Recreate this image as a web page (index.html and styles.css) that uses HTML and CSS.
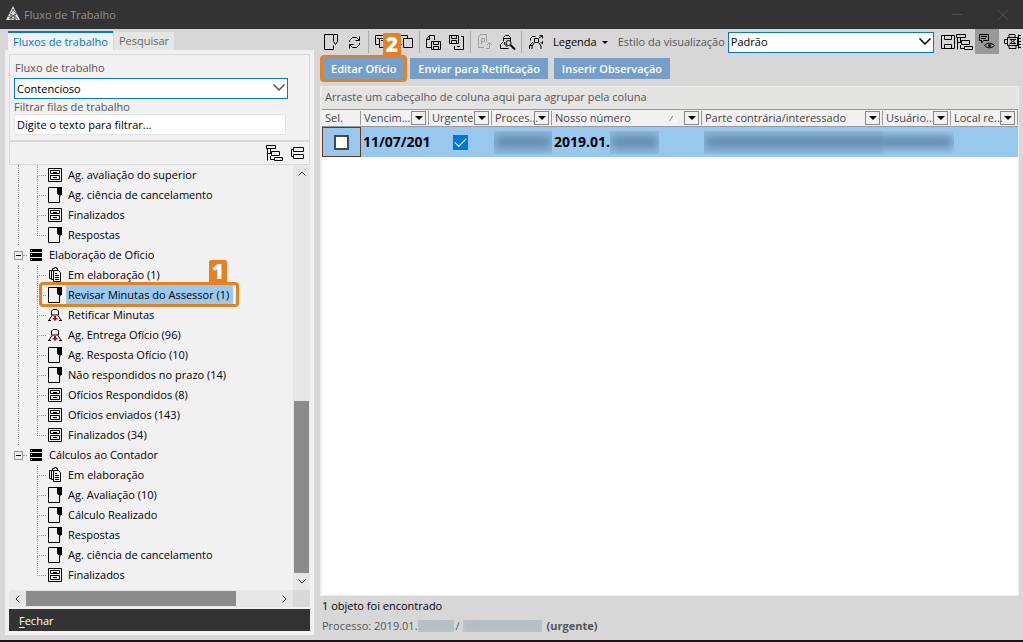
FILE: index.html
```
<!DOCTYPE html>
<html lang="pt-BR">
<head>
<meta charset="utf-8">
<title>Fluxo de Trabalho</title>
<link rel="stylesheet" href="styles.css">
</head>
<body>
<svg class="sprite" aria-hidden="true">
  <symbol id="i-drawer" viewBox="0 0 14 14"><path d="M.5.5h13v13H.5zM2.500 2.500h9v3h-9zM2.500 7.500h9v4h-9z" class="ln"/><path d="M5 4h4v1H5zM5 9h4v1H5z"/></symbol>
  <symbol id="i-page" viewBox="0 0 14 16"><path d="M9 .5H.5v15h11V9" class="ln"/><path d="M9 0h5v8h-1l-1 2-1-2H10L9 6z"/></symbol>
  <symbol id="i-docs" viewBox="0 0 14 16"><path d="M5.500 3.500h5l2 2v9h-7zM5 12.500H3.500v-9h2M3 11.500H1.500v-8h2M4.500 3V1.500h2v-1h2v1h1V3M7 6.500h2M7 8.500h4M7 10.500h4M7 12.500h4" class="ln"/></symbol>
  <symbol id="i-person" viewBox="0 0 14 14"><path d="M3.500 7V3l1.500-1.500h4L10.500 3v4zM4 7.500l-3 4.500M10 7.500l3 4.500M0 12.500h3M11 12.500h3" class="ln"/><path d="M6 8h2v2h2l-3 3-3-3h2z" class="red"/></symbol>
  <symbol id="i-stack" viewBox="0 0 12 12"><path d="M0 0h12v3H0zM0 4h12v4H0zM0 9h12v3H0z"/><path d="M1 1h1v1H1zM1 5h1v1H1zM1 10h1v1H1z" fill="#fff"/></symbol>
  <symbol id="i-tree" viewBox="0 0 17 16"><path d="M.5.5h9v3h-9zM5.500 6.500h8v4h-8zM8.500 12.500h8v3h-8zM1.500 4v11.500M1.500 8.500h4M4.500 4v4M4.500 11v3.500h4" class="ln"/></symbol>
  <symbol id="i-collapse" viewBox="0 0 13 12"><path d="M2.500.5h10v4h-10zM2.500 7.500h10v4h-10zM2 2.500H.5v7H2" class="ln"/></symbol>
  <symbol id="i-new" viewBox="0 0 15 16"><path d="M9 .5H.5v15h9v-4M9.500.5h4v7l-2 3-2-3z" class="ln"/></symbol>
  <symbol id="i-refresh" viewBox="0 0 13 13"><path d="M1.500 6V4.500l3-3h4l3 3V.5M11.500 4.500h-4M11.500 7v1.500l-3 3h-4l-3-3v4M1.500 8.500h4" class="ln"/></symbol>
  <symbol id="i-copyt" viewBox="0 0 15 14"><path d="M4 9.500H.5v-9h11V3M4.500 3.500h10v9h-10zM2 3.500h2M6 5.500h5M8.500 6v5" class="ln"/></symbol>
  <symbol id="i-copy" viewBox="0 0 15 14"><path d="M4 9.500H.5v-9h9V3M5.500 3.500h9v9h-9z" class="ln"/></symbol>
  <symbol id="i-savein" viewBox="0 0 15 15"><path d="M5 12.500H.5V4l3-3.500h5V5M.5 4.500h3V1M5.500 6.500h9v8h-9zM7.500 7v2.500h5V7M7.500 14v-2.500h5V14" class="ln"/></symbol>
  <symbol id="i-saveout" viewBox="0 0 15 15"><path d="M.5.5h9v8h-9zM2.500 1v2.500h5V1M2.500 8V5.500h5V8M12 1.500h2.500v13h-9V11M8 11.500h3" class="ln"/></symbol>
  <symbol id="i-export" viewBox="0 0 14 16"><path d="M6 13.500H.5V3l2-2.500h6V8M3.500 10V4.500h3v3h-3M8 14.500h3.500V9M9 11l2.500-2.500L14 11" class="ln"/></symbol>
  <symbol id="i-search" viewBox="0 0 16 15"><path d="M3.500 6V2.500l2-2h3l2 2V6M3.500 3.500h7M3.500 6.500L.5 9.500v4h8M4.500 7v2l3 3" class="ln"/><circle cx="8.500" cy="8" r="2.500" class="ln"/><path d="M10.500 10l4.500 4.500" class="ln thick"/></symbol>
  <symbol id="i-users" viewBox="0 0 14 15"><path d="M5.500 3.500h4v4h-4zM5 8l-2 3v3M10 8l2 3v3M1.500 5.500v-2l2-2h3M10.500.5h3v3M13 1l-3 2M.5 14v-3.500h3M1 10l3-3M13.500 6v3l-2-2" class="ln"/></symbol>
  <symbol id="i-save" viewBox="0 0 14 14"><path d="M.5.5h13v13H.5zM3.500 1v3.500h7V1M3.500 13V9.500h7V13" class="ln"/></symbol>
  <symbol id="i-view" viewBox="0 0 16 15"><path d="M.5.5h9v6h-5L2.500 9V6.500h-2zM2 2.500h6M2 4.500h5M5.500 11.500c3-3 7-3 10 0-3 3-7 3-10 0z" class="ln"/><circle cx="10.500" cy="11.500" r="1.500"/></symbol>
  <symbol id="i-board" viewBox="0 0 17 15"><path d="M3.500 3.500h10v8h-10zM5 3V.5h6V3M5 12v2.500h7V12M3 5.500H.5v4H3M5.500 5l3 2.500-3 2.500M12 5L9 7.500l3 2.500M6 5.500h5M6 9.500h5M14.500.5v14M15 1.500h2M15 4.500h2M15 7.500h2M15 10.500h2M15 13.500h2" class="ln"/></symbol>
  <symbol id="i-chevron" viewBox="0 0 12 7"><path d="M.5.5L6 6 11.500.5" class="ln bold"/></symbol>
</svg>

<div class="window">
  <header class="titlebar">
    <svg class="logo" width="14" height="15" viewBox="0 0 14 15" aria-hidden="true"><path d="M7 0l7 14H0z" fill="#ddd"/><path d="M3 7l9 6M2 10l8 4M11 7l-8 6M6 3l4 4M8 3L5 7M5 8v6M9 8v6" stroke="#333" stroke-width=".7"/></svg>
    <h1>Fluxo de Trabalho</h1>
    <button class="win" aria-label="Minimizar"><svg width="12" height="12" viewBox="0 0 12 12"><path d="M0 5.500h11"/></svg></button>
    <button class="win" aria-label="Fechar janela"><svg width="12" height="12" viewBox="0 0 12 12"><path d="M.5.5l11 11M11.500.5l-11 11"/></svg></button>
  </header>

  <div class="body">
    <aside class="side">
      <div class="tabs" role="tablist">
        <button class="tab active" role="tab" aria-selected="true">Fluxos de trabalho</button>
        <button class="tab" role="tab" aria-selected="false">Pesquisar</button>
      </div>
      <div class="panel">
        <div class="filters">
          <label class="first" for="flow">Fluxo de trabalho</label>
          <span class="combo"><select id="flow"><option>Contencioso</option></select><svg width="12" height="7"><use href="#i-chevron"/></svg></span>
          <label for="queue">Filtrar filas de trabalho</label>
          <input id="queue" type="text" value="Digite o texto para filtrar...">
        </div>
        <div class="treebar">
          <button aria-label="Expandir tudo"><svg width="17" height="16"><use href="#i-tree"/></svg></button>
          <button aria-label="Recolher tudo"><svg width="13" height="12"><use href="#i-collapse"/></svg></button>
        </div>
        <div class="treebox">
          <div class="tree">
            <ul class="leaves guided">
              <li><i class="branch"></i><svg width="14" height="14"><use href="#i-drawer"/></svg><span>Ag. avaliação do superior</span></li>
              <li><i class="branch"></i><svg width="14" height="16"><use href="#i-page"/></svg><span>Ag. ciência de cancelamento</span></li>
              <li><i class="branch"></i><svg width="14" height="14"><use href="#i-drawer"/></svg><span>Finalizados</span></li>
              <li><i class="branch"></i><svg width="14" height="16"><use href="#i-page"/></svg><span>Respostas</span></li>
            </ul>
            <div class="group"><button class="toggle" aria-label="Recolher Elaboração de Ofício"></button><i class="link"></i><svg width="12" height="12"><use href="#i-stack"/></svg><span>Elaboração de Ofício</span></div>
            <ul class="leaves guided">
              <li><i class="branch"></i><svg width="14" height="16"><use href="#i-docs"/></svg><span>Em elaboração (1)</span></li>
              <li class="selected"><i class="branch"></i><svg width="14" height="16"><use href="#i-page"/></svg><span>Revisar Minutas do Assessor (1)</span><b class="ring"></b><b class="step">1</b></li>
              <li><i class="branch"></i><svg width="14" height="14"><use href="#i-person"/></svg><span>Retificar Minutas</span></li>
              <li><i class="branch"></i><svg width="14" height="14"><use href="#i-person"/></svg><span>Ag. Entrega Ofício (96)</span></li>
              <li><i class="branch"></i><svg width="14" height="16"><use href="#i-page"/></svg><span>Ag. Resposta Ofício (10)</span></li>
              <li><i class="branch"></i><svg width="14" height="16"><use href="#i-page"/></svg><span>Não respondidos no prazo (14)</span></li>
              <li><i class="branch"></i><svg width="14" height="14"><use href="#i-drawer"/></svg><span>Ofícios Respondidos (8)</span></li>
              <li><i class="branch"></i><svg width="14" height="14"><use href="#i-drawer"/></svg><span>Ofícios enviados (143)</span></li>
              <li><i class="branch"></i><svg width="14" height="14"><use href="#i-drawer"/></svg><span>Finalizados (34)</span></li>
            </ul>
            <div class="group"><button class="toggle" aria-label="Recolher Cálculos ao Contador"></button><i class="link"></i><svg width="12" height="12"><use href="#i-stack"/></svg><span>Cálculos ao Contador</span></div>
            <ul class="leaves">
              <li><i class="branch"></i><svg width="14" height="16"><use href="#i-docs"/></svg><span>Em elaboração</span></li>
              <li><i class="branch"></i><svg width="14" height="16"><use href="#i-page"/></svg><span>Ag. Avaliação (10)</span></li>
              <li><i class="branch"></i><svg width="14" height="16"><use href="#i-page"/></svg><span>Cálculo Realizado</span></li>
              <li><i class="branch"></i><svg width="14" height="16"><use href="#i-page"/></svg><span>Respostas</span></li>
              <li><i class="branch"></i><svg width="14" height="16"><use href="#i-page"/></svg><span>Ag. ciência de cancelamento</span></li>
              <li><i class="branch"></i><svg width="14" height="14"><use href="#i-drawer"/></svg><span>Finalizados</span></li>
            </ul>
          </div>
          <div class="vscroll">
            <button aria-label="Rolar para cima"><svg width="8" height="5" viewBox="0 0 8 5"><path d="M.5 4.500L4 1l3.500 3.500" class="ln"/></svg></button>
            <div class="track"><div class="thumb"></div></div>
            <button aria-label="Rolar para baixo"><svg width="8" height="5" viewBox="0 0 8 5"><path d="M.5.5L4 4 7.500.5" class="ln"/></svg></button>
          </div>
          <div class="hscroll">
            <button aria-label="Rolar para a esquerda"><svg width="5" height="8" viewBox="0 0 5 8"><path d="M4.500.5L1 4l3.500 3.500" class="ln"/></svg></button>
            <div class="track"><div class="thumb"></div></div>
            <button aria-label="Rolar para a direita"><svg width="5" height="8" viewBox="0 0 5 8"><path d="M.5.5L4 4 .5 7.500" class="ln"/></svg></button>
          </div>
        </div>
        <button class="close"><u>F</u>echar</button>
      </div>
    </aside>

    <main class="main">
      <div class="toolbar">
        <button class="tool" aria-label="Novo"><svg width="15" height="16"><use href="#i-new"/></svg></button>
        <button class="tool" aria-label="Atualizar"><svg width="13" height="13"><use href="#i-refresh"/></svg></button>
        <i class="sep"></i>
        <button class="tool" aria-label="Copiar texto"><svg width="15" height="14"><use href="#i-copyt"/></svg></button>
        <button class="tool" aria-label="Copiar"><svg width="15" height="14"><use href="#i-copy"/></svg><b class="step">2</b></button>
        <i class="sep"></i>
        <button class="tool" aria-label="Salvar documento"><svg width="15" height="15"><use href="#i-savein"/></svg></button>
        <button class="tool" aria-label="Salvar em arquivo"><svg width="15" height="15"><use href="#i-saveout"/></svg></button>
        <i class="sep"></i>
        <button class="tool" aria-label="Exportar" disabled><svg width="14" height="16"><use href="#i-export"/></svg></button>
        <button class="tool" aria-label="Localizar"><svg width="16" height="15"><use href="#i-search"/></svg></button>
        <i class="sep"></i>
        <button class="tool" aria-label="Usuários"><svg width="14" height="15"><use href="#i-users"/></svg></button>
        <button class="legend">Legenda</button>
        <label for="style">Estilo da visualização</label>
        <span class="combo"><select id="style"><option>Padrão</option></select><svg width="12" height="7"><use href="#i-chevron"/></svg></span>
        <div class="viewtools">
          <button aria-label="Salvar estilo"><svg width="14" height="14"><use href="#i-save"/></svg></button>
          <button aria-label="Hierarquia"><svg width="17" height="16"><use href="#i-tree"/></svg></button>
          <button class="on" aria-label="Visualizar"><svg width="16" height="15"><use href="#i-view"/></svg></button>
          <button aria-label="Painel"><svg width="17" height="15"><use href="#i-board"/></svg></button>
        </div>
      </div>

      <div class="actions">
        <button>Editar Ofício<b class="ring"></b></button>
        <button>Enviar para Retificação</button>
        <button>Inserir Observação</button>
      </div>

      <section class="grid">
        <p class="hint">Arraste um cabeçalho de coluna aqui para agrupar pela coluna</p>
        <table>
          <colgroup><col class="c1"><col class="c2"><col class="c3"><col class="c4"><col class="c5"><col class="c6"><col class="c7"><col class="c8"></colgroup>
          <thead>
            <tr>
              <th><div>Sel.</div></th>
              <th><div><span>Vencim...</span><button aria-label="Filtrar Vencimento"></button></div></th>
              <th><div><span>Urgente</span><button aria-label="Filtrar Urgente"></button></div></th>
              <th><div><span>Proces...</span><button aria-label="Filtrar Processo"></button></div></th>
              <th><div><span>Nosso número</span><svg width="8" height="7" viewBox="0 0 8 7" aria-hidden="true"><path d="M.5 6.500l3.500-6" stroke="#888" fill="none"/><path d="M4 .5l3.500 6H.5" stroke="#fff" fill="none"/></svg><button aria-label="Filtrar Nosso número"></button></div></th>
              <th><div><span>Parte contrária/interessado</span><button aria-label="Filtrar Parte contrária"></button></div></th>
              <th><div><span>Usuário...</span><button aria-label="Filtrar Usuário"></button></div></th>
              <th><div><span>Local re...</span><button aria-label="Filtrar Local"></button></div></th>
            </tr>
          </thead>
          <tbody>
            <tr>
              <td class="pick"><input type="checkbox" aria-label="Selecionar"></td>
              <td>11/07/201</td>
              <td class="mid"><input type="checkbox" aria-label="Urgente" checked></td>
              <td><i class="mask"></i></td>
              <td><div class="number">2019.01.<i class="mask"></i></div></td>
              <td><i class="mask wide"></i></td>
              <td></td>
              <td></td>
            </tr>
          </tbody>
        </table>
      </section>

      <footer class="status">
        <p>1 objeto foi encontrado</p>
        <p class="process">Processo: 2019.01.<i class="mask s1"></i>/<i class="mask s2"></i><strong>(urgente)</strong></p>
      </footer>
    </main>
  </div>
</div>
</body>
</html>
```
FILE: styles.css
```
* { box-sizing: border-box; }
body { margin: 0; font: 11px/16px "Open Sans", "Noto Sans", sans-serif; color: #000; }
button, input, select { font: inherit; color: inherit; border: 0; border-radius: 0; margin: 0; padding: 0; background: none; }
p, h1, ul { margin: 0; padding: 0; }
svg { display: block; flex: none; }
.sprite { display: none; }
.ln { fill: none; stroke: currentColor; }
.thick { stroke-width: 2; }
.bold { stroke-width: 1.5; }
.red { fill: #c4001a; }

.window { height: 100vh; display: flex; flex-direction: column; background: #d7d7d7; border-bottom: 2px solid #1a1517; }
.titlebar { height: 29px; flex: none; display: flex; align-items: center; background: #333; padding: 0 14px 0 6px; }
.titlebar h1 { flex: 1; margin-left: 4px; font-size: 11px; font-weight: 400; color: #919191; }
.logo { margin-bottom: 2px; }
.win { margin-left: 33px; }
.win path { stroke: #4f4f4f; }

.body { flex: 1; min-height: 0; display: flex; gap: 6px; padding: 2px 4px 5px 5px; }
.side { flex: none; width: 309px; display: flex; flex-direction: column; }
.tabs { display: flex; align-items: flex-end; gap: 1px; padding-left: 3px; height: 19px; }
.tab { height: 18px; padding: 0 5px; background: #e5e5e3; color: #666; }
.tab.active { height: 19px; background: #f1f1f1; color: #0078d7; border-top: 2px solid #0078d7; }
.panel { flex: 1; min-height: 0; display: flex; flex-direction: column; background: #f1f1f1; padding: 4px; }
.filters { display: flex; flex-direction: column; align-items: flex-start; border: 1px solid #d7d7d7; border-bottom-width: 2px; padding: 2px 4px 5px; color: #555; }
.filters label { line-height: 15px; }
.filters .first { line-height: 21px; padding-left: 1px; }
.filters .combo { width: 274px; }
.filters input { width: 272px; height: 21px; background: #fff; border: 1px solid #e4e4e4; color: #000; padding: 0 2px; }
.combo { position: relative; display: block; }
.combo select { display: block; appearance: none; width: 100%; height: 21px; border: 1px solid #0078d7; background: #fff; color: #000; padding: 0 2px; }
.combo svg { position: absolute; right: 3px; top: 6px; pointer-events: none; }

.treebar { display: flex; align-items: center; justify-content: flex-end; gap: 8px; height: 23px; flex: none; padding-right: 5px; border: 1px solid #d7d7d7; border-top: 0; }
.treebox { flex: 1; min-height: 0; display: grid; grid-template: 1fr 17px / 1fr 17px; background: #d9d9d9; }
.tree { overflow: hidden; background: #f1f1f1; }
.leaves { list-style: none; padding-left: 9px; }
.leaves li { position: relative; display: flex; align-items: center; height: 20px; padding-left: 18px; border-left: 1px dotted transparent; }
.leaves.guided li { border-left-color: #999; }
.leaves span { margin-left: 4px; padding: 0 2px; line-height: 20px; white-space: nowrap; }
.selected span { background: #99c9ef; padding-right: 4px; }
.branch { width: 9px; height: 20px; margin-right: 2px; flex: none; }
.branch::before, .branch::after { content: ""; display: block; height: 10px; border-left: 1px dotted #999; }
.branch::before { border-bottom: 1px dotted #999; }
li:last-child .branch::after { border: 0; }
.group { display: flex; align-items: center; height: 20px; padding-left: 5px; }
.group span { margin-left: 7px; }
.toggle { width: 9px; height: 9px; border: 1px solid #999; display: grid; place-items: center; }
.toggle::before { content: ""; width: 5px; height: 1px; background: #000; }
.link { width: 4px; margin-right: 3px; border-top: 1px dotted #999; }

.ring { position: absolute; inset: -3px; border: 3px solid #e5811f; border-radius: 4px; pointer-events: none; }
.selected .ring { left: 20px; right: auto; width: 200px; top: -3px; bottom: -2px; }
.step { position: absolute; width: 18px; height: 24px; background: #e5811f; border-radius: 2px; color: #fff; font: 800 21px/23px "Open Sans", sans-serif; text-align: center; }
.selected .step { left: 190px; top: -25px; z-index: 1; }

.vscroll, .hscroll { display: flex; background: #e6e6e6; color: #333; }
.vscroll { flex-direction: column; }
.vscroll button, .hscroll button { width: 17px; height: 17px; display: grid; place-items: center; }
.track { flex: 1; display: flex; }
.vscroll .track { flex-direction: column; justify-content: flex-end; padding: 0 1px; }
.vscroll .thumb { height: 44%; background: #8b8b8b; }
.hscroll .track { padding: 1px 0; }
.hscroll .thumb { width: 84%; background: #8b8b8b; }
.close { flex: none; height: 22px; margin-top: 2px; padding: 2px 10px 0; background: #333; color: #fff; text-align: left; }
.close u { text-underline-offset: 2px; }

.main { flex: 1; min-width: 0; display: flex; flex-direction: column; margin-top: -2px; }
.toolbar { display: flex; align-items: center; height: 26px; flex: none; margin-right: -2px; white-space: nowrap; }
.tool { position: relative; width: 23px; height: 25px; display: grid; place-items: center; flex: none; }
.tool:disabled { color: #a0a0a0; }
.tool .step { left: -11px; top: 3px; z-index: 1; }
.sep { width: 1px; height: 22px; margin: 0 2px; background: #aaa; flex: none; }
.legend { display: flex; align-items: center; margin: 0 10px 0 6px; }
.legend::after { content: ""; margin-left: 5px; border: 3px solid transparent; border-top-color: #000; border-bottom: 0; }
.toolbar label { color: #555; }
.toolbar .combo { flex: 1; margin-left: 3px; }
.viewtools { display: flex; align-items: center; align-self: flex-start; padding-left: 7px; gap: 1px; flex: none; }
.viewtools .on { width: 24px; height: 25px; background: #999; display: grid; place-items: center; margin: 0 4px 0 1px; }

.actions { display: flex; gap: 6px; padding: 3px 3px 7px; }
.actions button { position: relative; height: 21px; padding: 0 8px; background: #739fca; color: #fff; font-weight: 600; white-space: nowrap; }

.grid { flex: 1; min-height: 0; background: #fff; border: 1px solid #eee; border-left-width: 2px; }
.hint { height: 22px; line-height: 20px; padding-left: 3px; background: #e4e4e3; color: #555; }
table { width: 100%; table-layout: fixed; border-collapse: separate; border-spacing: 0; }
.c1 { width: 39px; } .c2 { width: 68px; } .c3 { width: 63px; } .c4 { width: 60px; } .c5 { width: 150px; } .c7 { width: 68px; } .c8 { width: 67px; }
th { height: 18px; padding: 0; background: #f1f1f1; border: solid #999; border-width: 1px 0; font-weight: 400; text-align: left; color: #444; }
th div { display: flex; align-items: center; height: 14px; padding: 0 2px 0 3px; border-right: 1px solid #999; }
th span { flex: 1; min-width: 0; white-space: nowrap; }
th svg { margin-right: 7px; }
th button { flex: none; width: 15px; height: 14px; border: 1px solid #888; display: grid; place-items: center; }
th button::before { content: ""; border: 4px solid transparent; border-top-color: #000; border-bottom: 0; }
td { height: 30px; padding: 0 0 0 2px; background: #99c8ee; font-size: 14px; font-weight: 700; white-space: nowrap; }
td.pick { border: 1px solid #6b3a1c; padding: 0; text-align: center; }
td.mid { padding: 0; text-align: center; }
td input { appearance: none; display: inline-block; width: 15px; height: 15px; vertical-align: middle; background: #fff; border: 2px solid #4a4a4a; }
td input:checked { border: 0; background: #0078d7; display: inline-grid; place-items: center; }
td input:checked::before { content: ""; width: 10px; height: 5px; border: solid #fff; border-width: 0 0 1px 1px; transform: rotate(-45deg); margin-bottom: 3px; }
.number { display: flex; align-items: center; }
.mask { display: block; width: 58px; height: 23px; padding: 5px 1px; overflow: hidden; background: #8fbce1; }
.mask::before { content: ""; display: block; height: 12px; background: #6288ab; filter: blur(5px); }
.number .mask { width: 49px; }
.mask.wide { width: 250px; }

.status { padding: 1px 2px 0; height: 39px; flex: none; line-height: 18px; }
.process { display: flex; align-items: center; color: #555; line-height: 21px; }
.process strong { margin-left: 5px; }
.process .mask { height: 12px; background: #bdc4ca; padding: 0; }
.process .mask::before { background: #b4bcc3; }
.process .s1 { width: 36px; margin-right: 2px; }
.process .s2 { width: 79px; margin-left: 3px; }
```
